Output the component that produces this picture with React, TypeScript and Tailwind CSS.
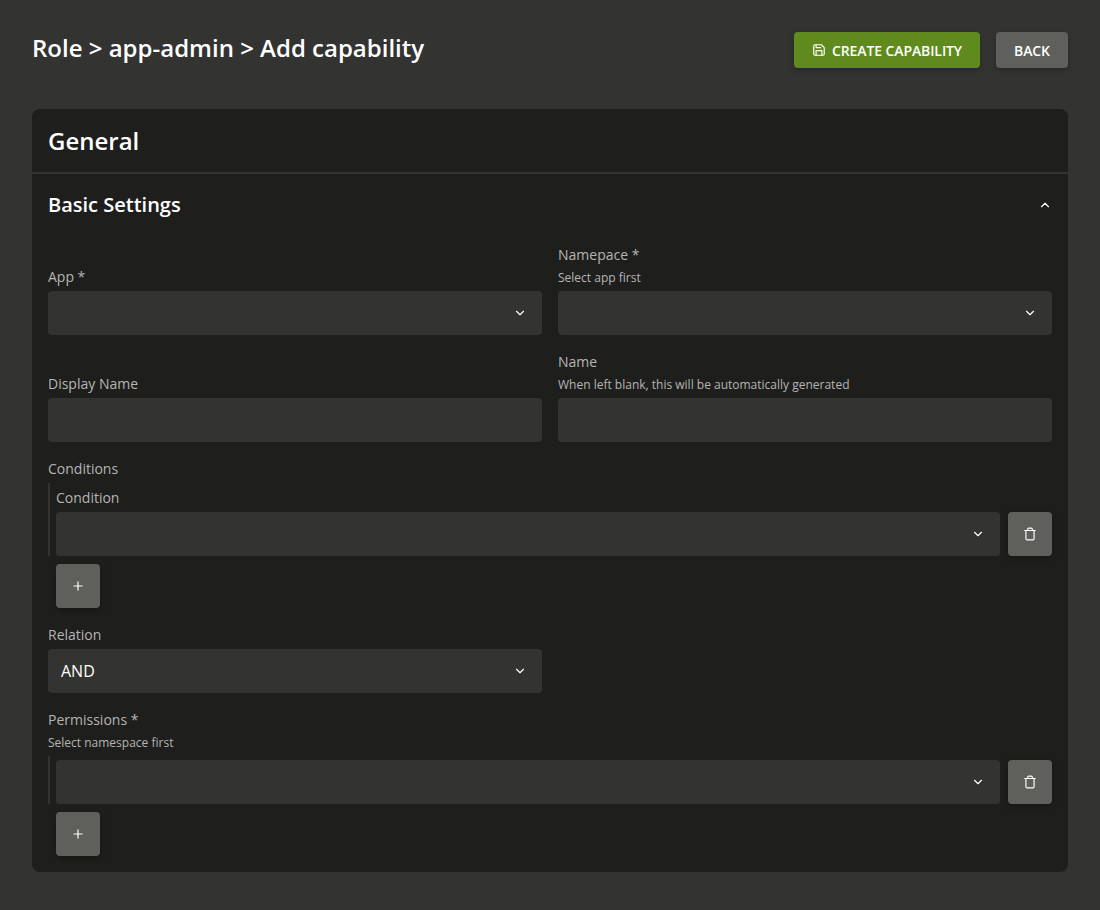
import React from 'react';
import { ChevronDown, ChevronUp } from 'lucide-react';
import { FiPlus, FiSave, FiTrash } from 'react-icons/fi';

const label = 'text-[14px] leading-[21px] text-[#b5b5b3]';
const hint = 'text-[12px] leading-[18px] text-[#b5b5b3]';
const gray = 'rounded bg-[#5f605b] text-white shadow-[0_2px_5px_rgba(0,0,0,0.26)]';

function Select({ value }: { value?: string }) {
  return (
    <div className="flex h-11 items-center justify-between rounded bg-[#333331] pr-[15px] pl-[13px] text-[16px] text-white">
      <span>{value}</span>
      <ChevronDown size={14} strokeWidth={2} />
    </div>
  );
}

function Field({ title, help, children }: { title: string; help?: string; children: React.ReactNode }) {
  return (
    <div className="flex flex-1 flex-col justify-end gap-1">
      <div className={label}>{title}</div>
      {help && <div className={hint}>{help}</div>}
      {children}
    </div>
  );
}

function TextInput() {
  return <input type="text" className="h-11 w-full rounded bg-[#333331] px-3 text-white outline-none" />;
}

function MultiRow({ title }: { title?: string }) {
  return (
    <>
      <div className="flex items-end gap-2 border-l-2 border-[#333331] pt-1 pl-1.5">
        <div className="flex flex-1 flex-col gap-1">
          {title && <div className={label}>{title}</div>}
          <Select />
        </div>
        <button className={`flex h-11 w-11 items-center justify-center ${gray}`}>
          <FiTrash size={14} />
        </button>
      </div>
      <button className={`mt-1 ml-2 flex h-11 w-11 items-center justify-center ${gray}`}>
        <FiPlus size={14} />
      </button>
    </>
  );
}

export default function App() {
  return (
    <main className="h-[910px] bg-[#333331] px-8 pt-8 font-['Open_Sans',sans-serif] antialiased">
      <header className="flex h-[77px] items-start justify-between">
        <h1 className="text-[24px] leading-[32px] font-semibold text-white">Role &gt; app-admin &gt; Add capability</h1>
        <div className="flex gap-4 text-[14px] font-semibold tracking-[-0.1px]">
          <button className="flex h-9 w-[186px] items-center justify-center gap-1.5 rounded bg-[#5f8a1e] text-white shadow-[0_2px_5px_rgba(0,0,0,0.26)]">
            <FiSave size={14} />
            CREATE CAPABILITY
          </button>
          <button className={`h-9 w-[72px] ${gray}`}>BACK</button>
        </div>
      </header>
      <section className="h-[763px] rounded-lg bg-[#1e1e1d]">
        <h2 className="h-[65px] border-b-2 border-[#333331] px-4 pt-4 text-[24px] leading-[32px] font-semibold text-white">General</h2>
        <div className="flex flex-col px-4 pt-4">
          <div className="flex h-[30px] items-center justify-between text-white">
            <h3 className="text-[20px] leading-[30px] font-semibold">Basic Settings</h3>
            <ChevronUp size={14} />
          </div>
          <div className="mt-6 flex flex-col gap-4">
            <div className="flex gap-4">
              <Field title="App *"><Select /></Field>
              <Field title="Namepace *" help="Select app first"><Select /></Field>
            </div>
            <div className="flex gap-4">
              <Field title="Display Name"><TextInput /></Field>
              <Field title="Name" help="When left blank, this will be automatically generated"><TextInput /></Field>
            </div>
            <div className="flex flex-col gap-1">
              <div className={label}>Conditions</div>
              <MultiRow title="Condition" />
            </div>
            <div className="flex w-[494px]">
              <Field title="Relation"><Select value="AND" /></Field>
            </div>
            <div className="flex flex-col gap-1">
              <div className={label}>Permissions *</div>
              <div className={hint}>Select namespace first</div>
              <MultiRow />
            </div>
          </div>
        </div>
      </section>
    </main>
  );
}
